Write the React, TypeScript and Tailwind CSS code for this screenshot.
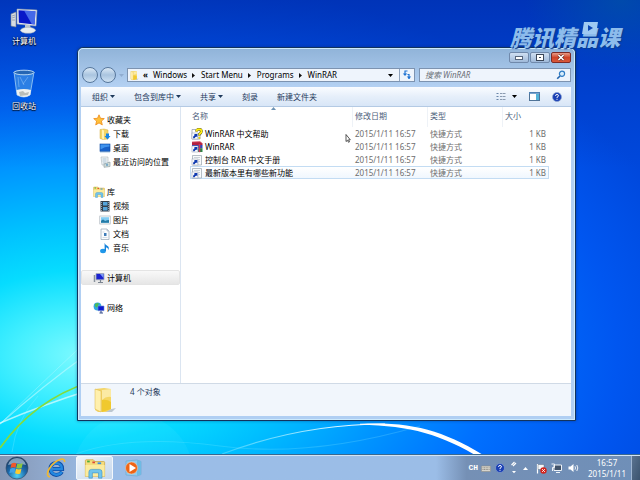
import { useState } from "react";
import type { ReactNode } from "react";

type IconProps = { className?: string };

function Wallpaper() {
  return (
    <svg
      className="absolute inset-0 h-full w-full"
      viewBox="0 0 640 480"
      preserveAspectRatio="none"
      aria-hidden="true"
    >
      <defs>
        <radialGradient
          id="glow"
          gradientUnits="userSpaceOnUse"
          cx="0"
          cy="0"
          r="1"
          gradientTransform="translate(80 355) scale(640 385)"
        >
          <stop offset="0" stopColor="#7cf9ff" />
          <stop offset="0.1" stopColor="#46f0ff" />
          <stop offset="0.22" stopColor="#06dcff" />
          <stop offset="0.34" stopColor="#00c0ff" />
          <stop offset="0.5" stopColor="#0094ff" />
          <stop offset="0.65" stopColor="#0070ff" />
          <stop offset="0.84" stopColor="#0056f0" />
          <stop offset="1" stopColor="#0048dc" />
        </radialGradient>
        <linearGradient id="dusk" x1="0" y1="0" x2="0" y2="1">
          <stop offset="0" stopColor="#0026a0" stopOpacity="0.6" />
          <stop offset="0.35" stopColor="#0030b0" stopOpacity="0" />
        </linearGradient>
        <linearGradient id="arc" x1="0" y1="0" x2="1" y2="0">
          <stop offset="0" stopColor="#6fe0ff" stopOpacity="0.5" />
          <stop offset="0.7" stopColor="#d8f6ff" />
          <stop offset="1" stopColor="#ffffff" />
        </linearGradient>
        <radialGradient id="corner" cx="0.97" cy="0" r="0.15">
          <stop offset="0" stopColor="#0060a0" stopOpacity="0.5" />
          <stop offset="1" stopColor="#0060a0" stopOpacity="0" />
        </radialGradient>
      </defs>
      <rect width="640" height="480" fill="url(#glow)" />
      <rect width="640" height="480" fill="url(#dusk)" />
      <rect width="640" height="480" fill="url(#corner)" />
      <circle cx="133" cy="474" r="60" fill="#8ff4ff" opacity="0.08" />
      <g fill="none">
        <path d="M0 424Q40 388 90 352" stroke="#c4faff" strokeOpacity="0.6" strokeWidth="1.2" />
        <path d="M0 424Q30 394 90 338" stroke="#c4faff" strokeOpacity="0.35" />
        <path d="M0 423Q45 404 90 390" stroke="#d8fcff" strokeOpacity="0.75" strokeWidth="1.6" />
        <path d="M12 452Q16 420 38 396" stroke="#c4faff" strokeOpacity="0.2" />
        <path d="M0 448Q34 400 90 382" stroke="#84dc3c" strokeWidth="1.8" />
        <path d="M76 454Q130 434 220 446T420 426" stroke="#8ff0ff" strokeOpacity="0.22" strokeWidth="1.2" />
        <path d="M222 454C280 432 335 424 385 424" stroke="url(#arc)" strokeWidth="1.2" />
      </g>
      <path d="M360 423.800C415 421.500 445 431 490 459L482 459C440 434 412 426 360 424.800Z" fill="#fff" />
    </svg>
  );
}

function DesktopComputerIcon() {
  return (
    <svg viewBox="0 0 28 26" className="h-[26px] w-7" aria-hidden="true">
      <path d="M1 6l5-2v15l-5-1z" fill="#d6dce2" stroke="#79838e" strokeWidth=".6" />
      <path d="M2 8l3-1M2 10l3-1M2 12h3" stroke="#8b98a4" strokeWidth=".8" />
      <path d="M7 1l20 1-1 16-19-2z" fill="#e9eef3" stroke="#8e9baa" strokeWidth=".6" />
      <path d="M8.500 2.300l17 .9-.8 13.200-15.800-1.600z" fill="#0818c8" />
      <path d="M14 2.600l11.500.6-.8 13.200-3-.3z" fill="#5a84f4" opacity=".75" />
      <path d="M15 17h5l1 4h-6z" fill="#bcc6cf" />
      <ellipse cx="18" cy="22.300" rx="7.500" ry="3" fill="#e8edf0" stroke="#9aa5b0" strokeWidth=".5" />
    </svg>
  );
}

function RecycleBinIcon() {
  return (
    <svg viewBox="0 0 24 30" className="h-[30px] w-6" aria-hidden="true">
      <path d="M2 3l3 23q7 4 13 0l4-23z" fill="#3f92e6" fillOpacity=".7" stroke="#a5d0f6" strokeWidth=".8" />
      <path d="M4.500 21l.7 5q7 4 13 0l.8-5q-7-2-14.500 0z" fill="#eef1f0" />
      <path d="M7 23l4-1 2 2 4-1-1 3-8 1z" fill="#b8bdb9" />
      <ellipse cx="12" cy="3.500" rx="10" ry="2.300" fill="#2566b4" stroke="#c6e2f8" strokeWidth=".9" />
      <path d="M8 8l4 8M16 8l-5 7M6 8l1 10" stroke="#c2e2ff" strokeOpacity=".4" strokeWidth=".9" />
    </svg>
  );
}

function FolderIcon({ className = "h-3 w-3" }: IconProps) {
  return (
    <svg viewBox="0 0 24 28" className={className} aria-hidden="true">
      <path d="M14 24l9-2-4 4H12z" fill="#8a97a3" opacity=".5" />
      <path d="M2 3l9-1 7 1v20l-5 3H5l-3-2z" fill="#f3d468" />
      <path d="M9 4l9-1v20l-9 3z" fill="#f5d662" />
      <path d="M9 4l9-1v8q-5-1-9 3z" fill="#fbeaa4" />
      <path d="M2 3l6 2v21l-6-3z" fill="#fff0ac" stroke="#d9b548" strokeWidth=".5" />
      <path d="M9 14q5-1 9 2v7l-9 3z" fill="#efc622" opacity=".8" />
    </svg>
  );
}

function StarIcon() {
  return (
    <svg viewBox="0 0 12 12" className="h-3 w-3" aria-hidden="true">
      <path
        d="M6 .8l1.500 3.500 3.800.3-2.900 2.500.9 3.800L6 8.900l-3.300 2 .9-3.800L.7 4.600l3.800-.3z"
        fill="#ffc03a"
        stroke="#ee8a18"
        strokeWidth=".8"
      />
    </svg>
  );
}

function DownloadsIcon() {
  return (
    <svg viewBox="0 0 12 12" className="h-3 w-3" aria-hidden="true">
      <path d="M1 1.500L5 1l4 1v9l-5 .5-3-1z" fill="#f4d566" stroke="#d5ae43" strokeWidth=".5" />
      <path d="M3 1.500l2 1v9l-2-1z" fill="#fff2b4" />
      <path d="M7 5.500h3V8h1.500L8.500 11.500 5.500 8H7z" fill="#1687e6" />
    </svg>
  );
}

function DesktopIcon() {
  return (
    <svg viewBox="0 0 12 12" className="h-3 w-3" aria-hidden="true">
      <rect x="1" y="2" width="10" height="7.500" fill="#1761c9" stroke="#0d489f" strokeWidth=".6" />
      <path d="M1.500 2.500h9v2q-5 0-9 3z" fill="#3f93ee" />
      <path d="M1 10h10" stroke="#8bb4dc" strokeWidth=".8" />
    </svg>
  );
}

function RecentIcon() {
  return (
    <svg viewBox="0 0 12 12" className="h-3 w-3" aria-hidden="true">
      <path d="M2 1h7v8H3z" fill="#f2f5f6" stroke="#a7b3bb" strokeWidth=".6" />
      <path d="M3.500 3h4M3.500 5h4M4 7h3" stroke="#8fb0c4" strokeWidth=".7" />
      <path d="M5 8l6-2v4.500l-6 .8z" fill="#d6dfd9" stroke="#85969c" strokeWidth=".6" />
      <circle cx="8" cy="8.800" r="1.300" fill="#7cabc9" />
    </svg>
  );
}

function LibraryIcon({ className = "h-3 w-3" }: IconProps) {
  return (
    <svg viewBox="0 0 24 24" className={className} aria-hidden="true">
      <path d="M1 3q0-1 1-1h8l2 2h10q1 0 1 1v16H1z" fill="#f5dc7c" stroke="#c9a038" strokeWidth=".8" />
      <rect x="3" y="3" width="3" height="2" fill="#4bae38" />
      <rect x="9" y="4" width="3" height="2" fill="#de4b37" />
      <rect x="15" y="5" width="4" height="2" fill="#3b8fde" />
      <path d="M1 8h22v13H1z" fill="#fbeb9e" />
      <path d="M5 23v-7q0-3 3-3h9q3 0 3 3v7h-4v-6H9v6z" fill="#71c4ec" stroke="#3f91c4" strokeWidth=".7" />
    </svg>
  );
}

function VideoIcon() {
  return (
    <svg viewBox="0 0 12 12" className="h-3 w-3" aria-hidden="true">
      <rect x="1.500" y="1" width="9" height="10.500" fill="#343f4c" />
      <path d="M4 2h4.500v3.500H4zM4 7h4.500v3.500H4z" fill="#55a5dc" />
      <path d="M2.500 2v9M9.600 2v9" stroke="#c2d1de" strokeWidth=".7" strokeDasharray="1 1" />
    </svg>
  );
}

function PictureIcon() {
  return (
    <svg viewBox="0 0 12 12" className="h-3 w-3" aria-hidden="true">
      <rect x=".8" y="2" width="10.400" height="8" fill="#fafcfd" stroke="#a0aab3" strokeWidth=".6" />
      <path d="M2 3.200h8v5.600H2z" fill="#82ccf4" />
      <path d="M2 7q2-3 4 0 2-1 4-1v2.800H2z" fill="#247ba6" />
    </svg>
  );
}

function DocumentIcon() {
  return (
    <svg viewBox="0 0 12 12" className="h-3 w-3" aria-hidden="true">
      <path d="M2 1h6l2 2v8.500H2z" fill="#fbfcfe" stroke="#95a3b2" strokeWidth=".7" />
      <path d="M8 1v2h2" fill="#d4dde6" stroke="#95a3b2" strokeWidth=".5" />
      <path d="M3.500 4h2M3.500 9.500h5" stroke="#bcc8d4" strokeWidth=".6" />
      <path d="M5 5h2.500v3H5z" fill="#3f7cb8" />
    </svg>
  );
}

function MusicIcon() {
  return (
    <svg viewBox="0 0 12 12" className="h-3 w-3" aria-hidden="true">
      <ellipse cx="4" cy="9" rx="2.900" ry="2.200" fill="#2098ea" />
      <path d="M5.600 9V.8q.4 2 2.600 2.900 2.600 1.600 1 4.300.2-2-2.200-2.800V9z" fill="#1583dc" />
    </svg>
  );
}

function ComputerIcon() {
  return (
    <svg viewBox="0 0 12 12" className="h-3 w-3" aria-hidden="true">
      <path d="M1.500 3v7" stroke="#8a939c" strokeWidth="1.500" />
      <path d="M3 1.500h8v6.300H3z" fill="#1a22d0" stroke="#a4adba" strokeWidth=".8" />
      <path d="M7 2h3.500v4z" fill="#7d9cf4" />
      <path d="M5 10.500h5M7.500 8v2" stroke="#7a8490" strokeWidth="1.200" />
    </svg>
  );
}

function NetworkIcon() {
  return (
    <svg viewBox="0 0 12 12" className="h-3 w-3" aria-hidden="true">
      <circle cx="4.500" cy="4.500" r="3.900" fill="#31a7df" />
      <path d="M2 2q3-2 4 0-2 1-1 3-2 1-3-1z" fill="#4cbc58" />
      <path d="M5 4h6v4.700H5z" fill="#0d1bd2" stroke="#6f8fd0" strokeWidth=".6" />
      <path d="M8 9v2M6.500 11h3.500" stroke="#39518e" strokeWidth="1.100" />
    </svg>
  );
}

// Shortcut overlay shared by every file icon in the list
function ShortcutArrow() {
  return (
    <>
      <rect x="1" y="5" width="6" height="6" fill="#fff" stroke="#8d99ab" strokeWidth=".5" />
      <path d="M2 10.300q-.2-2.800 1.800-3.400L3 6h3.400v3.400l-1-1Q4 8.800 3.600 10.300z" fill="#0f3ab0" />
    </>
  );
}

function HelpFileIcon() {
  return (
    <svg viewBox="0 0 12 12" className="h-3 w-3 shrink-0" aria-hidden="true">
      <path d="M1 1.500h8V11H1z" fill="#fff" stroke="#7a8593" strokeWidth=".6" />
      <path d="M5.500 3.600Q5.500 1.300 8 1.300t2.500 2.200Q10.500 5 8.300 6v1.500" fill="none" stroke="#1c1c00" strokeWidth="2.400" />
      <path d="M5.500 3.600Q5.500 1.300 8 1.300t2.500 2.200Q10.500 5 8.300 6v1.500" fill="none" stroke="#ffee10" strokeWidth="1.900" />
      <circle cx="8.300" cy="9.800" r="1.100" fill="#e8d400" />
      <ShortcutArrow />
    </svg>
  );
}

function WinrarIcon() {
  return (
    <svg viewBox="0 0 12 12" className="h-3 w-3 shrink-0" aria-hidden="true">
      <path d="M1 1l8-.5 2.500 2v1.800L1 4z" fill="#b3203f" />
      <path d="M1 4h10.500v3.200H1z" fill="#3348bd" />
      <path d="M1 7.200h10.500V11H1z" fill="#2c8545" />
      <path d="M8.500 3v8.200" stroke="#c8375a" strokeWidth="1.600" />
      <path d="M1 1l8-.3 2.500 2" stroke="#e05b6c" strokeWidth=".7" fill="none" />
      <ShortcutArrow />
    </svg>
  );
}

function TextFileIcon() {
  return (
    <svg viewBox="0 0 12 12" className="h-3 w-3 shrink-0" aria-hidden="true">
      <path d="M1.500 1.500h9V11h-9z" fill="#f8fafb" stroke="#98a3ae" strokeWidth=".7" />
      <path d="M3 3.500h6M7.500 5.500H9M7.500 7.500H9" stroke="#b7c1ca" strokeWidth=".7" />
      <ShortcutArrow />
    </svg>
  );
}

function Caret({ className = "text-[#1e395b]" }: IconProps) {
  return (
    <svg viewBox="0 0 5 3" className={`h-[3px] w-[5px] shrink-0 ${className}`} aria-hidden="true">
      <path d="M0 0h5L2.500 3z" fill="currentColor" />
    </svg>
  );
}

function CrumbArrow() {
  return (
    <svg viewBox="0 0 3 5" className="h-[5px] w-[3px] shrink-0" aria-hidden="true">
      <path d="M0 0l3 2.500L0 5z" fill="#111" />
    </svg>
  );
}

function HelpIcon({ className = "h-[10px] w-[10px]" }: IconProps) {
  return (
    <svg viewBox="0 0 12 12" className={className} aria-hidden="true">
      <circle cx="6" cy="6" r="5.400" fill="#1a3fb4" stroke="#8da5d0" strokeWidth=".8" />
      <path d="M4.200 4.600q0-1.600 1.800-1.600t1.800 1.500Q7.800 5.500 6 6.300v.9M6 8.200v1.200" fill="none" stroke="#fff" strokeWidth="1.200" />
    </svg>
  );
}

function StartOrb() {
  return (
    <svg viewBox="0 0 24 24" className="h-6 w-6" aria-hidden="true">
      <defs>
        <radialGradient id="orb" cx=".5" cy=".85" r=".8">
          <stop offset="0" stopColor="#4fd2f4" />
          <stop offset=".5" stopColor="#1d6cae" />
          <stop offset="1" stopColor="#17365f" />
        </radialGradient>
      </defs>
      <circle cx="12" cy="12" r="11" fill="url(#orb)" stroke="#36506e" strokeWidth=".7" />
      <path d="M3 9Q5 2 12 2t9 7q-9-3-18 0z" fill="#c8dcec" opacity=".6" />
      <path d="M6.500 7.500q2.500-1.500 5-.3l-1 4.600q-2.500-1.200-5 .2z" fill="#f0572a" />
      <path d="M12.300 7.500q2.500 1.200 5.500-.3l-1.200 4.800q-2.500 1.200-5.300 0z" fill="#8cc63e" />
      <path d="M5.300 12.800q2.500-1.400 5-.2l-1 4.400q-2.500-1.100-5 .3z" fill="#3fa3ea" />
      <path d="M11.100 12.800q2.600 1.200 5.400 0l-1.200 4.700q-2.600 1.100-5.200-.2z" fill="#ffcb2e" />
    </svg>
  );
}

function ExplorerEIcon() {
  return (
    <svg viewBox="0 0 20 20" className="h-5 w-5" aria-hidden="true">
      <path
        d="M16 13.800Q14 17 10.200 17 4.500 16.500 4.500 10.800T10.400 4.800q5.800.2 5.800 6.200H7"
        fill="none"
        stroke="#0f4da6"
        strokeWidth="3.800"
      />
      <path
        d="M15.800 13.800Q14 16.700 10.200 16.700 4.800 16 4.800 10.800T10.400 5.100q5.500.2 5.500 5.900H7"
        fill="none"
        stroke="#2388e0"
        strokeWidth="2.400"
      />
      <path d="M4 19Q-.5 18 3 11 8 3 15 1.200q4-.8 3.500 3" fill="none" stroke="#f2b830" strokeWidth="1.700" />
    </svg>
  );
}

function MediaPlayerIcon() {
  return (
    <svg viewBox="0 0 18 18" className="h-[18px] w-[18px]" aria-hidden="true">
      <path d="M2 2l11-1 4 1.500v13L13 17 2 16z" fill="#8fcbee" stroke="#6aa5cc" strokeWidth=".6" />
      <path d="M13 1v16l4-1.500v-13z" fill="#6fbbe4" />
      <circle cx="7.500" cy="9" r="6" fill="#ee6414" stroke="#f9c8a4" strokeWidth=".6" />
      <path d="M5.500 5v8L12 9z" fill="#fff" />
    </svg>
  );
}

const breadcrumbs = ["Windows", "Start Menu", "Programs", "WinRAR"];

const toolbarItems = [
  { label: "组织", menu: true },
  { label: "包含到库中", menu: true },
  { label: "共享", menu: true },
  { label: "刻录", menu: false },
  { label: "新建文件夹", menu: false },
];

const sidebarGroups = [
  {
    title: "收藏夹",
    icon: <StarIcon />,
    items: [
      { label: "下载", icon: <DownloadsIcon /> },
      { label: "桌面", icon: <DesktopIcon /> },
      { label: "最近访问的位置", icon: <RecentIcon /> },
    ],
  },
  {
    title: "库",
    icon: <LibraryIcon />,
    items: [
      { label: "视频", icon: <VideoIcon /> },
      { label: "图片", icon: <PictureIcon /> },
      { label: "文档", icon: <DocumentIcon /> },
      { label: "音乐", icon: <MusicIcon /> },
    ],
  },
  { title: "计算机", icon: <ComputerIcon />, items: [], active: true },
  { title: "网络", icon: <NetworkIcon />, items: [] },
];

const files = [
  { name: "WinRAR 中文帮助", icon: <HelpFileIcon /> },
  { name: "WinRAR", icon: <WinrarIcon /> },
  { name: "控制台 RAR 中文手册", icon: <TextFileIcon /> },
  { name: "最新版本里有哪些新功能", icon: <TextFileIcon /> },
];

function DesktopShortcut({ label, icon }: { label: string; icon: ReactNode }) {
  return (
    <button className="flex w-12 flex-col items-center gap-px text-white [text-shadow:0_1px_1px_#000,0_0_2px_#000]">
      {icon}
      <span className="leading-3">{label}</span>
    </button>
  );
}

function WindowButtons() {
  return (
    <div className="flex justify-end gap-px pt-[3px]">
      <button
        aria-label="最小化"
        className="flex h-[11px] w-5 items-center justify-center rounded-xs border border-[#7089ab] bg-linear-to-b from-[#cfdff2] to-[#9fb9d9]"
      >
        <svg viewBox="0 0 8 4" className="h-1 w-2">
          <rect x=".5" y=".5" width="7" height="3" fill="#fff" stroke="#56657b" />
        </svg>
      </button>
      <button
        aria-label="最大化"
        className="flex h-[11px] w-5 items-center justify-center rounded-xs border border-[#7089ab] bg-linear-to-b from-[#cfdff2] to-[#9fb9d9]"
      >
        <svg viewBox="0 0 8 7" className="h-[7px] w-2">
          <rect x=".5" y=".5" width="7" height="6" fill="#fff" stroke="#3b4759" />
          <rect x="3" y="3" width="2" height="1" fill="#3b4759" />
        </svg>
      </button>
      <button
        aria-label="关闭"
        className="flex h-[11px] w-5 items-center justify-center rounded-xs border border-[#7c2a26] bg-linear-to-b from-[#e79a86] via-[#cf4428] to-[#d9583a]"
      >
        <svg viewBox="0 0 8 7" className="h-[7px] w-2">
          <path d="M1.500 1l5 5M6.500 1l-5 5" stroke="#5a2320" strokeWidth="2.800" />
          <path d="M1.500 1l5 5M6.500 1l-5 5" stroke="#fff" strokeWidth="1.700" />
        </svg>
      </button>
    </div>
  );
}

function AddressRow() {
  const [query, setQuery] = useState("");

  return (
    <div className="flex h-6 items-center">
      <div className="flex gap-0.5 pl-px">
        <button
          aria-label="后退"
          className="h-4 w-4 rounded-full border border-[#57779c] bg-linear-to-b from-[#dbe9f6] via-[#a9c4df] to-[#cfe2f4]"
        />
        <button
          aria-label="前进"
          className="h-4 w-4 rounded-full border border-[#57779c] bg-linear-to-b from-[#dbe9f6] via-[#a9c4df] to-[#cfe2f4]"
        />
      </div>
      <Caret className="mx-[3px] text-[#8facd0]" />
      <div className="flex h-[14px] min-w-0 flex-1 items-center border border-[#7d93b0] bg-[#eef4fc] text-black">
        <FolderIcon className="ml-0.5 h-[11px] w-[9px] shrink-0" />
        <nav className="ml-1 flex items-center gap-[5px] whitespace-nowrap">
          <span className="font-bold">«</span>
          {breadcrumbs.map((crumb, i) => (
            <span key={crumb} className="flex items-center gap-1.5">
              {i > 0 && <CrumbArrow />}
              <a href="#">{crumb}</a>
            </span>
          ))}
        </nav>
        <button aria-label="历史" className="mr-1 ml-auto p-0.5">
          <Caret className="text-black" />
        </button>
        <button
          aria-label="刷新"
          className="flex h-full w-[15px] items-center justify-center border-l border-[#8fa3bd]"
        >
          <svg viewBox="0 0 10 10" className="h-[10px] w-[10px]">
            <path d="M5.500 1H3v3.500M7 9V4.500H5.500" fill="none" stroke="#1e72d2" strokeWidth="1.200" />
            <path d="M.8 3.500h4.400L3 6z" fill="#1e72d2" />
            <path d="M4.800 6.500h4.400L7 9z" fill="#1e72d2" />
          </svg>
        </button>
      </div>
      <div className="ml-1 flex h-[14px] w-[152px] items-center border border-[#7d93b0] bg-[#eef4fc] px-1">
        <input
          value={query}
          onChange={(e) => setQuery(e.target.value)}
          placeholder="搜索 WinRAR"
          aria-label="搜索 WinRAR"
          className="h-3 min-w-0 flex-1 px-px italic outline-none placeholder:text-[#6a6f76]"
        />
        <svg viewBox="0 0 10 10" className="h-[10px] w-[10px]" aria-hidden="true">
          <circle cx="6" cy="3.800" r="2.600" fill="#d9eefc" stroke="#2f7cc4" strokeWidth="1.200" />
          <path d="M4 6L1.200 8.800" stroke="#2265ae" strokeWidth="1.600" />
        </svg>
      </div>
    </div>
  );
}

function Toolbar() {
  return (
    <div className="flex h-5 items-center border-b border-[#b4cae4] bg-linear-to-b from-[#fafcff] via-[#e6effa] to-[#d8e6f7] pr-[9px] pl-[11px] text-[#1e395b]">
      <div className="flex gap-[19px]">
        {toolbarItems.map((item) => (
          <button key={item.label} className="flex items-center gap-0.5 whitespace-nowrap">
            {item.label}
            {item.menu && <Caret />}
          </button>
        ))}
      </div>
      <div className="ml-auto flex items-center">
        <button aria-label="更改视图">
          <svg viewBox="0 0 10 9" className="h-[9px] w-[10px]">
            <path d="M.5 1.500h2M.5 4.500h2M.5 7.500h2" stroke="#6985a8" />
            <path d="M4 1.500h5.500M4 4.500h5.500M4 7.500h5.500" stroke="#8b9bb0" strokeDasharray="2.500 .5" />
          </svg>
        </button>
        <button aria-label="更多选项" className="ml-1.5">
          <Caret className="text-black" />
        </button>
        <button aria-label="预览窗格" className="ml-3">
          <svg viewBox="0 0 11 9" className="h-[9px] w-[11px]">
            <rect x=".5" y=".5" width="10" height="8" fill="#fff" stroke="#4f7397" />
            <path d="M0 1h11" stroke="#4e86bc" strokeWidth="1.500" />
            <path d="M7 2h3v6H7z" fill="#51b2d8" />
          </svg>
        </button>
        <button aria-label="帮助" className="ml-3">
          <HelpIcon />
        </button>
      </div>
    </div>
  );
}

function Sidebar() {
  return (
    <nav className="flex w-[100px] shrink-0 flex-col gap-[15px] overflow-hidden border-r border-[#dbe5f1] pt-[5px] text-black">
      {sidebarGroups.map((group) => (
        <div key={group.title}>
          <a
            href="#"
            className={`flex h-[15px] items-center gap-0.5 whitespace-nowrap ${
              group.active
                ? "rounded-xs border border-[#e4e4e4] bg-linear-to-b from-[#f9f9f9] to-[#e6e6e6] pl-[11px]"
                : "pl-3"
            }`}
          >
            {group.icon}
            {group.title}
          </a>
          {group.items.map((item) => (
            <a
              key={item.label}
              href="#"
              className="flex h-[14px] items-center gap-0.5 pl-[18px] whitespace-nowrap"
            >
              {item.icon}
              {item.label}
            </a>
          ))}
        </div>
      ))}
    </nav>
  );
}

function FileList() {
  const [selected, setSelected] = useState(3);

  return (
    <div className="min-w-0 flex-1 overflow-hidden pl-[9px]">
      <table className="table-fixed border-separate border-spacing-0 text-left leading-[11px]">
        <colgroup>
          <col className="w-[163px]" />
          <col className="w-[75px]" />
          <col className="w-[75px]" />
          <col className="w-[46px]" />
        </colgroup>
        <thead>
          <tr className="h-5 text-[#4c607a]">
            <th className="relative border-r border-[#eef2f7] pb-1 pl-0.5 font-normal">
              名称
              <svg viewBox="0 0 5 3" className="absolute top-0 left-1/2 h-[3px] w-[5px]" aria-hidden="true">
                <path d="M0 3h5L2.500 0z" fill="#6d92b4" />
              </svg>
            </th>
            <th className="border-r border-[#eef2f7] pb-1 pl-0.5 font-normal">修改日期</th>
            <th className="border-r border-[#eef2f7] pb-1 pl-0.5 font-normal">类型</th>
            <th className="pb-1 pl-0.5 font-normal">大小</th>
          </tr>
        </thead>
        <tbody>
          {files.map((file, i) => {
            const cell =
              i === selected
                ? "border-y border-[#c3dcf3] bg-linear-to-b from-white to-[#f0f7fe] first:border-l last:border-r"
                : "border-y border-transparent first:border-l last:border-r";
            return (
              <tr key={file.name} onClick={() => setSelected(i)} className="h-[13px] text-[#6d6d6d]">
                <td className={`p-0 text-black ${cell}`}>
                  <span className="flex h-[11px] items-center gap-0.5 whitespace-nowrap">
                    {file.icon}
                    {file.name}
                  </span>
                </td>
                <td className={`p-0 pl-0.5 whitespace-nowrap ${cell}`}>2015/1/11 16:57</td>
                <td className={`p-0 pl-0.5 whitespace-nowrap ${cell}`}>快捷方式</td>
                <td className={`p-0 pr-0.5 text-right whitespace-nowrap ${cell}`}>1 KB</td>
              </tr>
            );
          })}
        </tbody>
      </table>
    </div>
  );
}

function ExplorerWindow() {
  return (
    <section className="absolute top-[47px] right-16 bottom-[34px] left-[77px] rounded-t-md border border-[#12335c] bg-[#b0cff3] shadow-[0_0_3px_#00206080]">
      <div className="flex h-full flex-col rounded-t-[5px] border border-[#cdeafc] bg-linear-to-b from-[#91b4d9] via-[#b3d0f2] via-10% to-[#b0cff3] pr-[3px] pb-[3px] pl-0.5">
        <WindowButtons />
        <AddressRow />
        <Toolbar />
        <div className="flex min-h-0 flex-1 bg-white">
          <Sidebar />
          <FileList />
        </div>
        <footer className="flex h-[33px] shrink-0 items-start border-t border-[#d0dae6] bg-[#f1f6fc] pl-3 text-[#1e395b]">
          <FolderIcon className="mt-0.5 h-7 w-6" />
          <p className="mt-0.5 ml-[13px] leading-3">4 个对象</p>
        </footer>
      </div>
    </section>
  );
}

function Watermark() {
  return (
    <div className="absolute top-[22px] right-5 font-['Noto_Sans_CJK_SC',sans-serif] text-[22px] leading-7 font-black whitespace-nowrap text-[#8dbcec] italic [text-shadow:1px_1px_1px_#0a3c90]">
      腾讯精品课
      <svg viewBox="0 0 16 12" className="absolute top-0 right-[22px] h-3 w-4" aria-hidden="true">
        <path d="M2 0h14l-2 12H0z" fill="#9fcaf2" />
        <path d="M6 3v6l5-3z" fill="#0b46b4" />
      </svg>
    </div>
  );
}

function Taskbar() {
  return (
    <footer className="relative flex h-[25px] shrink-0 items-center border-t border-[#d4e4f4] bg-linear-to-r from-[#8596b4] via-[#9bbde7] via-15% to-[#9bbde7] shadow-[0_-1px_0_#3a6890]">
      <button aria-label="开始" className="ml-[5px]">
        <StartOrb />
      </button>
      <button aria-label="Internet Explorer" className="ml-[17px]">
        <ExplorerEIcon />
      </button>
      <button
        aria-label="资源管理器"
        className="ml-[10px] flex h-6 w-[37px] items-center justify-center rounded-xs border border-[#f2f7fc] bg-linear-to-br from-[#eef3f9] to-[#c5d7ec]"
      >
        <LibraryIcon className="h-[21px] w-[22px]" />
      </button>
      <button aria-label="媒体播放器" className="ml-[11px]">
        <MediaPlayerIcon />
      </button>
      <div className="ml-auto flex h-full items-center bg-linear-to-r from-transparent via-[#7590b5] via-15% to-[#6f8fb8] pl-8 text-white">
        <span className="mr-[3px] font-['Liberation_Mono',monospace] font-bold">CH</span>
        <svg viewBox="0 0 10 7" className="h-[7px] w-[10px]" aria-hidden="true">
          <rect x=".5" y="1" width="9" height="5.500" rx=".5" fill="#d7d5cd" stroke="#8f8e88" strokeWidth=".6" />
          <path d="M1.500 2.800h7M1.500 4.500h7" stroke="#77756f" strokeWidth=".8" strokeDasharray="1 .6" />
        </svg>
        <HelpIcon className="ml-1 h-[10px] w-[10px]" />
        <svg viewBox="0 0 7 14" className="ml-[5px] h-[14px] w-[7px]" aria-hidden="true">
          <path d="M1.500 4l3-3M3 5l3-3" stroke="#fff" strokeWidth="1.200" />
          <path d="M2 10h4l-2 2.200z" fill="#fff" />
        </svg>
        <button aria-label="显示隐藏的图标" className="ml-1.5">
          <svg viewBox="0 0 5 3" className="h-[3px] w-[5px]">
            <path d="M0 3h5L2.500 0z" fill="#fff" />
          </svg>
        </button>
        <svg viewBox="0 0 11 11" className="ml-2 h-[11px] w-[11px]" aria-hidden="true">
          <path d="M1.500 1v9.500" stroke="#fff" strokeWidth="1.200" />
          <path d="M2 1.500h6v5H2z" fill="#f4f6f8" stroke="#4a5a70" strokeWidth=".4" />
          <circle cx="7.500" cy="7.500" r="3.200" fill="#d3251d" />
          <path d="M6.200 6.200l2.600 2.600M8.800 6.200L6.200 8.800" stroke="#fff" />
        </svg>
        <svg viewBox="0 0 11 11" className="ml-1 h-[11px] w-[11px]" aria-hidden="true">
          <path d="M3 2h7.500v5.500H3z" fill="#42536a" stroke="#eef3f8" />
          <path d="M5 9.500h4" stroke="#eef3f8" />
          <path d="M.5 1h3v3.500h-2V8" fill="none" stroke="#eef3f8" />
        </svg>
        <svg viewBox="0 0 11 10" className="ml-1.5 h-[10px] w-[11px]" aria-hidden="true">
          <path d="M.5 3.500h2L5.500 1v8l-3-2.500h-2z" fill="#fff" />
          <path d="M7 3.300q1 1.700 0 3.400M8.800 2q2 3 0 6" fill="none" stroke="#fff" strokeWidth=".9" />
        </svg>
        <time className="ml-1.5 flex w-11 flex-col items-center leading-[11px]">
          <span>16:57</span>
          <span>2015/1/11</span>
        </time>
        <button
          aria-label="显示桌面"
          className="ml-0.5 h-full w-[9px] border-l border-[#9fb6d2] bg-linear-to-br from-[#5a7390] to-[#3c546f]"
        />
      </div>
    </footer>
  );
}

export default function App() {
  return (
    <div className="relative flex h-screen flex-col overflow-hidden bg-[#0058e8] font-['Noto_Sans','Noto_Sans_CJK_SC',sans-serif] text-[8px] leading-3 select-none">
      <Wallpaper />
      <main className="relative min-h-0 flex-1">
        <div className="flex w-12 flex-col gap-[22px] pt-2">
          <DesktopShortcut label="计算机" icon={<DesktopComputerIcon />} />
          <DesktopShortcut label="回收站" icon={<RecycleBinIcon />} />
        </div>
        <ExplorerWindow />
        <Watermark />
        <svg viewBox="0 0 6 9" className="absolute top-[134px] left-[345px] h-[9px] w-1.5" aria-hidden="true">
          <path d="M1 .5v7l1.500-1.200 1 2 1-.5-1-2h1.800z" fill="#fff" stroke="#111" strokeWidth=".7" />
        </svg>
      </main>
      <Taskbar />
    </div>
  );
}
